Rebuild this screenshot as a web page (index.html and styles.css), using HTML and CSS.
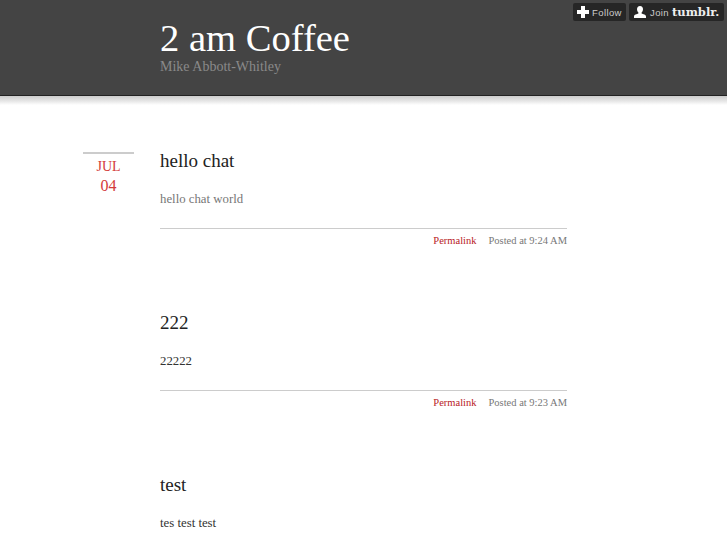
FILE: index.html
```html
<!DOCTYPE html>
<html lang="en">
<head>
<meta charset="utf-8">
<title>2 am Coffee</title>
<link rel="stylesheet" href="styles.css">
</head>
<body>
<header class="masthead">
  <div class="masthead-inner">
    <h1 class="blog-title">2 am Coffee</h1>
    <p class="blog-author">Mike Abbott-Whitley</p>
  </div>
  <div class="controls">
    <a class="control control-follow">
      <svg class="icon-plus" width="12" height="12" viewBox="0 0 12 12"><path d="M4 0h4v4h4v4H8v4H4V8H0V4h4z" fill="#fff"/></svg>
      <span class="control-label">Follow</span>
    </a>
    <a class="control control-join">
      <svg class="icon-user" width="14" height="12" viewBox="0 0 14 12"><path d="M7 0c2 0 3 1.400 3 3.200 0 1.500-.8 2.600-1.400 3.200v1.200c1.500.6 4.400 1 4.400 3V12H1v-1.400c0-2 2.900-2.400 4.400-3V6.400C4.800 5.800 4 4.700 4 3.200 4 1.400 5 0 7 0z" fill="#fff"/></svg>
      <span class="control-label">Join</span>
      <span class="control-brand">tumblr.</span>
    </a>
  </div>
</header>
<div class="shadow"></div>
<main class="posts">
  <article class="post">
    <div class="date"><span>JUL</span><span>04</span></div>
    <div class="post-body">
      <h2 class="post-title">hello chat</h2>
      <p class="post-text post-text-grey">hello chat world</p>
      <div class="post-meta"><a class="permalink">Permalink</a><span class="posted">Posted at 9:24 AM</span></div>
    </div>
  </article>
  <article class="post">
    <div class="post-body">
      <h2 class="post-title">222</h2>
      <p class="post-text">22222</p>
      <div class="post-meta"><a class="permalink">Permalink</a><span class="posted">Posted at 9:23 AM</span></div>
    </div>
  </article>
  <article class="post">
    <div class="post-body">
      <h2 class="post-title">test</h2>
      <p class="post-text">tes test test</p>
    </div>
  </article>
</main>
</body>
</html>
```
FILE: styles.css
```css
html, body {
  margin: 0;
  padding: 0;
  height: 545px;
  overflow: hidden;
  background: #fff;
  font-family: "Liberation Serif", "Times New Roman", serif;
}
.masthead {
  position: relative;
  height: 95px;
  background: #444;
  border-bottom: 1px solid #222;
  box-sizing: content-box;
}
.masthead-inner {
  padding: 16px 0 0 160px;
}
.blog-title {
  margin: 0;
  font-size: 38.6px;
  line-height: 44px;
  font-weight: 400;
  color: #fff;
}
.blog-author {
  margin: -1px 0 0;
  font-size: 14px;
  line-height: 16px;
  color: #8a8a8a;
}
.controls {
  position: absolute;
  top: 3px;
  right: 3px;
  display: flex;
  gap: 3px;
}
.control {
  display: flex;
  align-items: center;
  height: 18px;
  padding: 0 4px;
  background: #262626;
  border-radius: 2px;
  color: #ccc;
  font-family: "Liberation Sans", Arial, sans-serif;
  font-size: 9.5px;
}
.control-follow { width: 45px; gap: 3px; }
.control-join { width: 87px; gap: 3px; }
.control-label { letter-spacing: 0.4px; }
.control-brand {
  font-family: "DejaVu Serif", serif;
  font-weight: 700;
  font-size: 11.5px;
  color: #eee;
}
.shadow {
  height: 9px;
  background: linear-gradient(#ccc, #e6e6e6 55%, #fff);
}
.posts {
  display: flex;
  flex-direction: column;
  padding-top: 43px;
}
.post {
  position: relative;
  height: 162px;
  padding-left: 160px;
}
.date {
  position: absolute;
  top: 4px;
  left: 83px;
  width: 51px;
  border-top: 2px solid #ccc;
  padding-top: 3px;
  display: flex;
  flex-direction: column;
  align-items: center;
  color: #d33a3a;
  font-size: 14px;
  line-height: 19px;
}
.date span:last-child { font-size: 16px; line-height: 20px; }
.post-body { width: 407px; }
.post-title {
  margin: 0;
  padding-top: 1px;
  font-size: 19px;
  line-height: 24px;
  font-weight: 400;
  color: #222;
}
.post-text {
  margin: 0;
  padding-top: 16px;
  font-size: 12.8px;
  line-height: 20px;
  color: #333;
}
.post-text-grey { color: #777; }
.post-meta {
  margin-top: 19px;
  border-top: 1px solid #ccc;
  padding-top: 5px;
  display: flex;
  justify-content: flex-end;
  gap: 12px;
  font-size: 10.5px;
  line-height: 14px;
}
.permalink { color: #b82025; }
.posted { color: #777; }
```
